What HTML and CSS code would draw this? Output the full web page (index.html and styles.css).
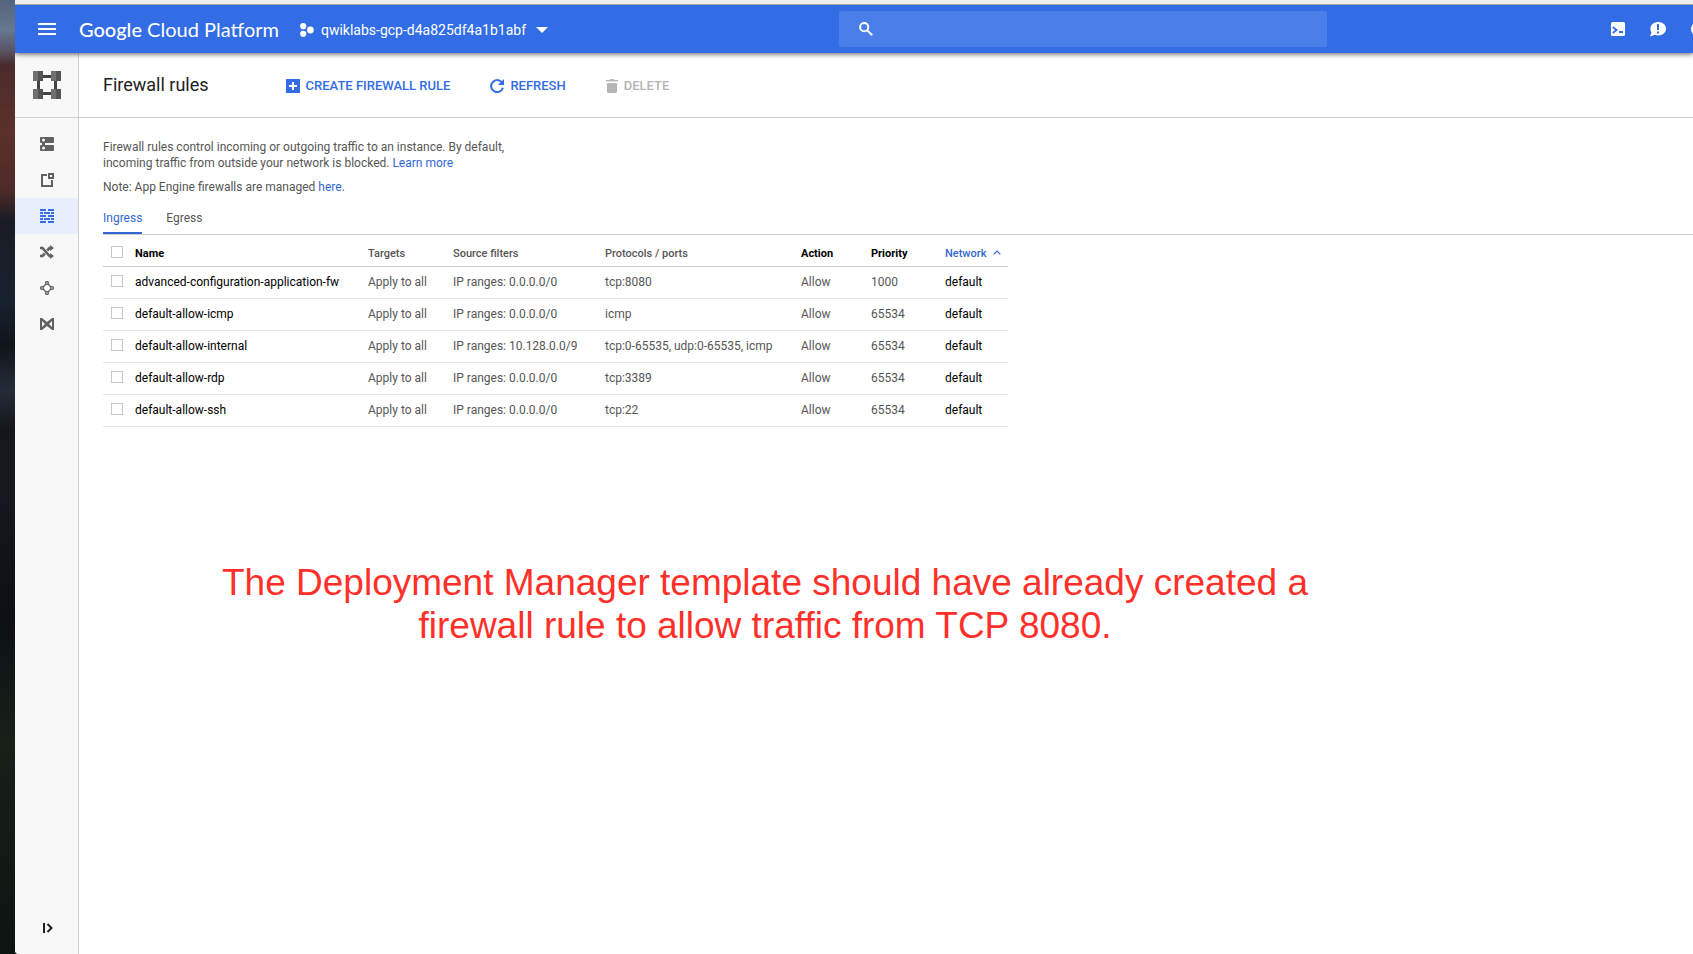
FILE: index.html
```html
<!DOCTYPE html>
<html lang="en">
<head>
<meta charset="utf-8">
<title>Firewall rules - Google Cloud Platform</title>
<link rel="stylesheet" href="styles.css">
</head>
<body>
<div class="desktop">
<div class="window">
  <header class="topbar">
    <div class="brand">
      <button class="icon-btn menu-btn" aria-label="Menu"><svg width="18" height="12" viewBox="0 0 18 12"><path fill="#fff" d="M0 0h18v2H0zM0 5h18v2H0zM0 10h18v2H0z"/></svg></button>
      <a class="logo" href="#"><b>Google</b> Cloud Platform</a>
      <button class="project"><svg width="14" height="14" viewBox="0 0 14 14"><g fill="#fff"><circle cx="3.2" cy="3.2" r="3.1"/><circle cx="3.2" cy="10.8" r="3.1"/><circle cx="10.4" cy="7" r="3.4"/></g></svg><span>qwiklabs-gcp-d4a825df4a1b1abf</span><svg width="12" height="6" viewBox="0 0 12 6"><path fill="#fff" d="M0 0h12L6 6z"/></svg></button>
    </div>
    <label class="search">
      <svg width="14" height="14" viewBox="0 0 14 14"><g fill="none" stroke="#fff" stroke-width="2"><circle cx="5.2" cy="5.2" r="4.1"/><path d="M8.2 8.2l5 5"/></g></svg>
      <input type="text" aria-label="Search">
    </label>
    <div class="tools">
      <button class="icon-btn" aria-label="Cloud Shell"><svg width="14" height="14" viewBox="0 0 14 14"><rect width="14" height="14" rx="1.5" fill="#fff"/><path d="M1.8 5l3.7 3-3.7 3" fill="none" stroke="#326de6" stroke-width="1.8"/><path d="M8 9h4v2H8z" fill="#326de6"/></svg></button>
      <button class="icon-btn" aria-label="Send feedback"><svg width="16" height="15" viewBox="0 0 16 15"><path fill="#fff" d="M8.2 0C12.600 0 16 2.800 16 6.700s-3.400 6.700-7.800 6.700c-1.200 0-2.300-.2-3.300-.6L0 14.600l1.500-4C.8 9.500.4 8.200.4 6.700.4 2.800 3.800 0 8.200 0z"/><path fill="#326de6" d="M7 2h2v6H7zM7 9.500h2v2H7z"/></svg></button>
      <button class="icon-btn" aria-label="Help"><svg width="14" height="14" viewBox="0 0 14 14"><circle cx="7" cy="7" r="7" fill="#fff"/></svg></button>
    </div>
  </header>
  <div class="workspace">
    <aside class="sidebar">
      <a class="product" href="#" aria-label="VPC network"><svg width="28" height="28" viewBox="0 0 28 28"><path fill="#424242" d="M9 4h10v3H9zM9 21h10v3H9zM4 9h3v10H4zM21 9h3v10h-3z"/><path fill="#707070" d="M0 0h5v10H0zM18 0h5v10h-5zM0 18h5v10H0zM18 18h5v10h-5z"/><path fill="#545454" d="M5 0h5v10H5zM23 0h5v10h-5zM5 18h5v10H5zM23 18h5v10h-5z"/></svg></a>
      <nav class="nav">
        <a href="#" aria-label="VPC networks"><svg width="14" height="14" viewBox="0 0 14 14"><path fill="#616161" fill-rule="evenodd" d="M1 0h12q1 0 1 1v4q0 1-1 1H5v2h8q1 0 1 1v4q0 1-1 1H1q-1 0-1-1V9q0-1 1-1h1V6H1Q0 6 0 5V1Q0 0 1 0zM3.500 1.600a1.500 1.500 0 100 3 1.500 1.500 0 000-3zm0 7.900a1.500 1.500 0 100 3 1.500 1.500 0 000-3z"/></svg></a>
        <a href="#" aria-label="External IP addresses"><svg width="14" height="14" viewBox="0 0 14 14"><path fill="#616161" fill-rule="evenodd" d="M1 1h6v2H3v9h8V7h2v7H1zM8 0h6v6H8zM10 2v2h2V2z"/></svg></a>
        <a class="active" href="#" aria-label="Firewall rules"><svg width="14" height="14" viewBox="0 0 14 14"><path fill="#326de6" d="M0 0h6v2H0zM8 0h6v2H8zM0 3h3v2H0zM4 3h6v2H4zM11 3h3v2h-3zM0 6h6v2H0zM8 6h6v2H8zM0 9h3v2H0zM4 9h6v2H4zM11 9h3v2h-3zM0 12h6v2H0zM8 12h6v2H8z"/></svg></a>
        <a href="#" aria-label="Routes"><svg width="14" height="14" viewBox="0 0 14 14"><g fill="none" stroke="#616161" stroke-width="2.600"><path d="M0 3h2.500l7 8H12M0 11h2.500l2.300-2.500M7.200 5.500L9.500 3H12"/></g><path fill="#616161" d="M10 0l4 3-4 3zM10 8l4 3-4 3z"/></svg></a>
        <a href="#" aria-label="VPC network peering"><svg width="14" height="14" viewBox="0 0 14 14"><g fill="none" stroke="#616161" stroke-width="1.400"><circle cx="7" cy="2" r="1.400"/><circle cx="7" cy="12" r="1.400"/><circle cx="2" cy="7" r="1.400"/><circle cx="12" cy="7" r="1.400"/><path d="M3 6l3-3M8 3l3 3M11 8l-3 3M6 11L3 8"/></g></svg></a>
        <a href="#" aria-label="Shared VPC"><svg width="14" height="12" viewBox="0 0 14 12"><path fill="#616161" fill-rule="evenodd" d="M0 0h2l5 4 5-4h2v12h-2L7 8l-5 4H0zM2 3v6l3-3zM12 3L9 6l3 3z"/></svg></a>
      </nav>
      <button class="icon-btn expand" aria-label="Expand navigation"><svg width="10" height="10" viewBox="0 0 10 10"><g fill="none" stroke="#212121" stroke-width="2"><path d="M1 0v10M4.500 1l4 4-4 4"/></g></svg></button>
    </aside>
    <main class="main">
      <div class="toolbar">
        <h1>Firewall rules</h1>
        <button class="action"><svg width="14" height="14" viewBox="0 0 14 14"><path fill="#326de6" fill-rule="evenodd" d="M.5 0h13l.5.5v13l-.5.5H.5l-.5-.5V.5zM6 3v3H3v2h3v3h2V8h3V6H8V3z"/></svg>CREATE FIREWALL RULE</button>
        <button class="action"><svg width="14" height="14" viewBox="0 0 14 14"><path d="M11.800 3.300A6 6 0 1012.900 8.800" fill="none" stroke="#326de6" stroke-width="2"/><path fill="#326de6" d="M14 0v6H8z"/></svg>REFRESH</button>
        <button class="action" disabled><svg width="12" height="14" viewBox="0 0 12 14"><path fill="#b5b5b5" d="M0 1h3.500l1-1h3l1 1H12v1.500H0zM1 4h10v8.500q0 1.500-1.500 1.500h-7Q1 14 1 12.500z"/></svg>DELETE</button>
      </div>
      <div class="content">
        <p class="intro">Firewall rules control incoming or outgoing traffic to an instance. By default,<br>incoming traffic from outside your network is blocked. <a href="#">Learn more</a></p>
        <p class="intro">Note: App Engine firewalls are managed <a href="#">here</a>.</p>
        <div class="tabs" role="tablist">
          <button class="tab selected" role="tab" aria-selected="true">Ingress</button>
          <button class="tab" role="tab" aria-selected="false">Egress</button>
        </div>
        <table class="rules">
          <colgroup><col class="c-check"><col class="c-name"><col class="c-targets"><col class="c-source"><col class="c-ports"><col class="c-action"><col class="c-priority"><col class="c-network"></colgroup>
          <thead>
            <tr><th class="check"><input type="checkbox" aria-label="Select all"></th><th class="strong">Name</th><th>Targets</th><th>Source filters</th><th>Protocols / ports</th><th class="strong">Action</th><th class="strong">Priority</th><th class="sorted">Network<svg width="8" height="5" viewBox="0 0 8 5"><path d="M.7 4.300L4 1l3.300 3.300" fill="none" stroke="#3367d6" stroke-width="1.200"/></svg></th></tr>
          </thead>
          <tbody>
            <tr><td class="check"><input type="checkbox" aria-label="Select advanced-configuration-application-fw"></td><td class="dark">advanced-configuration-application-fw</td><td>Apply to all</td><td>IP ranges: 0.0.0.0/0</td><td>tcp:8080</td><td>Allow</td><td>1000</td><td class="dark">default</td></tr>
            <tr><td class="check"><input type="checkbox" aria-label="Select default-allow-icmp"></td><td class="dark">default-allow-icmp</td><td>Apply to all</td><td>IP ranges: 0.0.0.0/0</td><td>icmp</td><td>Allow</td><td>65534</td><td class="dark">default</td></tr>
            <tr><td class="check"><input type="checkbox" aria-label="Select default-allow-internal"></td><td class="dark">default-allow-internal</td><td>Apply to all</td><td>IP ranges: 10.128.0.0/9</td><td>tcp:0-65535, udp:0-65535, icmp</td><td>Allow</td><td>65534</td><td class="dark">default</td></tr>
            <tr><td class="check"><input type="checkbox" aria-label="Select default-allow-rdp"></td><td class="dark">default-allow-rdp</td><td>Apply to all</td><td>IP ranges: 0.0.0.0/0</td><td>tcp:3389</td><td>Allow</td><td>65534</td><td class="dark">default</td></tr>
            <tr><td class="check"><input type="checkbox" aria-label="Select default-allow-ssh"></td><td class="dark">default-allow-ssh</td><td>Apply to all</td><td>IP ranges: 0.0.0.0/0</td><td>tcp:22</td><td>Allow</td><td>65534</td><td class="dark">default</td></tr>
          </tbody>
        </table>
        <p class="note">The Deployment Manager template should have already created a<br>firewall rule to allow traffic from TCP 8080.</p>
      </div>
    </main>
  </div>
</div>
</div>
</body>
</html>
```
FILE: styles.css
```css
* { box-sizing: border-box; }
body { margin: 0; font-family: Roboto, "Liberation Sans", sans-serif; font-size: 12px; line-height: 16px; color: #565656; }
button { font: inherit; color: inherit; background: none; border: 0; padding: 0; cursor: pointer; }
a { color: #3367d6; text-decoration: none; }
svg { display: block; flex: none; }

.desktop { min-height: 100vh; display: flex; padding-left: 15px; background: linear-gradient(#53657e 0, #66778f 30px, #5a5566 50px, #4a2b2c 65px, #5c302a 130px, #4e2a28 190px, #1a1c24 220px, #18222e 300px, #10151a 345px, #242c38 390px, #14171a 430px, #14181e 500px, #0c1014 620px, #182018 740px, #0c1412 100%); }
.window { flex: 1; min-width: 0; display: flex; flex-direction: column; overflow: hidden; background: #fff; border-top: 4px solid #eee; border-bottom-left-radius: 4px; }

.topbar { position: relative; z-index: 1; display: grid; grid-template-columns: minmax(auto, 824fr) 488fr 366fr; align-items: center; height: 49px; background: #326de6; border-top: 1px solid #a6a6a6; box-shadow: 0 1px 5px rgba(0, 0, 0, .65); color: #fff; }
.brand { display: flex; align-items: center; white-space: nowrap; }
.icon-btn { display: flex; align-items: center; justify-content: center; flex: none; width: 40px; height: 40px; }
.menu-btn { width: 64px; }
.logo { color: #fff; font-family: Lato, sans-serif; font-size: 20px; line-height: 24px; }
.logo b { font-weight: 500; }
.project { display: flex; align-items: center; margin-left: 21px; padding-top: 2px; gap: 7px; font-size: 14px; line-height: 20px; }
.project svg:last-child { margin-left: 3px; }
.search { display: flex; align-items: center; height: 36px; padding-left: 20px; background: #4a7fe9; border-radius: 2px; }
.search input { flex: 1; min-width: 0; height: 36px; padding: 0 12px; border: 0; background: none; color: #fff; font: inherit; font-size: 14px; outline: 0; }
.tools { display: flex; justify-content: flex-end; margin-right: -25px; }

.workspace { flex: 1; display: flex; }
.sidebar { flex: none; width: 64px; display: flex; flex-direction: column; background: #f8f8f8; border-right: 1px solid #d0d0d0; }
.product { display: flex; align-items: center; justify-content: center; height: 65px; padding-left: 1px; border-bottom: 1px solid #d0d0d0; }
.nav { flex: 1; padding-top: 8px; }
.nav a { display: flex; align-items: center; justify-content: center; height: 36px; }
.nav .active { background: #e8eefb; }
.expand { width: 100%; margin-bottom: 6px; padding-left: 2px; }

.main { flex: 1; min-width: 0; }
.toolbar { display: flex; align-items: center; height: 65px; padding-left: 24px; border-bottom: 1px solid #ccc; }
.toolbar h1 { margin: 0 77px 0 0; font-size: 18px; line-height: 24px; font-weight: 400; color: #212121; }
.action { display: flex; align-items: center; gap: 6px; margin-right: 40px; padding-top: 2px; font-size: 13px; font-weight: 500; color: #326de6; }
.action:disabled { color: #b5b5b5; }

.content { padding: 21px 0 0 24px; }
.intro { margin: 0 0 8px; }
.tabs { display: flex; gap: 24px; border-bottom: 1px solid #ccc; }
.tab { padding: 7px 0 6px; border-bottom: 2px solid transparent; }
.tab.selected { color: #3367d6; border-color: #3367d6; }

.rules { width: 905px; max-width: 100%; table-layout: fixed; border-collapse: separate; border-spacing: 0; }
.c-check { width: 20px; }
.c-name { width: 233px; }
.c-targets { width: 85px; }
.c-source { width: 152px; }
.c-ports { width: 196px; }
.c-action { width: 70px; }
.c-priority { width: 74px; }
.c-network { width: 75px; }
.rules th, .rules td { height: 32px; padding: 0 0 2px 12px; text-align: left; white-space: nowrap; border-bottom: 1px solid #e4e4e4; }
.rules th { font-size: 11px; font-weight: 500; border-color: #ccc; padding-top: 6px; padding-bottom: 0; }
.rules .strong { color: #000; font-weight: 700; }
.rules .dark { color: #000; }
.rules .sorted { color: #3367d6; }
.sorted svg { display: inline-block; margin-left: 7px; vertical-align: 2px; }
.rules .check { padding-left: 8px; }
.rules input { appearance: none; display: block; width: 12px; height: 12px; margin: 0 0 2px; border: 1px solid #c6c6c6; background: #fff; }
.rules th input { margin-bottom: 4px; }

.note { width: 1324px; max-width: 100%; margin: 134px 0 0; text-align: center; font-family: "Liberation Sans", sans-serif; font-size: 37px; line-height: 43px; color: #ff3029; }
```
